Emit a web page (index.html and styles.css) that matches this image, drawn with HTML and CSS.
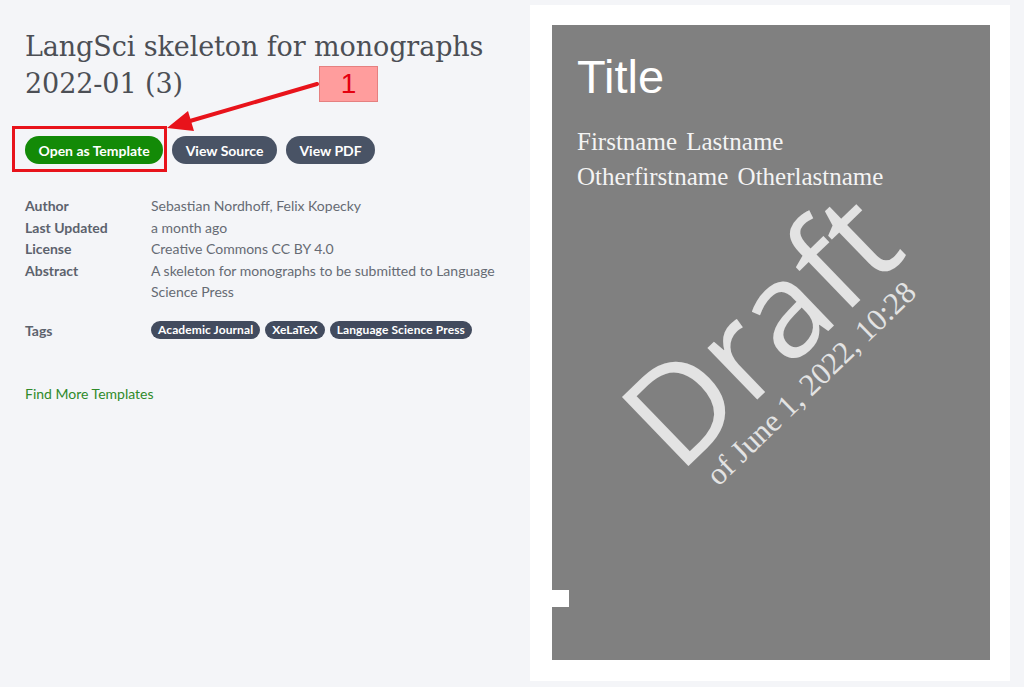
FILE: index.html
```html
<!DOCTYPE html>
<html>
<head>
<meta charset="utf-8">
<link rel="stylesheet" href="styles.css">
</head>
<body>
<div class="page">
  <section class="info">
    <h1 class="title"><span class="tline">LangSci skeleton for monographs</span><span class="tline">2022-01 (3)</span></h1>
    <div class="actions">
      <a class="btn btn-primary">Open as Template</a>
      <a class="btn btn-dark">View Source</a>
      <a class="btn btn-dark">View PDF</a>
    </div>
    <dl class="meta">
      <dt>Author</dt><dd>Sebastian Nordhoff, Felix Kopecky</dd>
      <dt>Last Updated</dt><dd>a month ago</dd>
      <dt>License</dt><dd>Creative Commons CC BY 4.0</dd>
      <dt>Abstract</dt><dd>A skeleton for monographs to be submitted to Language Science Press</dd>
      <dt class="tags-label">Tags</dt>
      <dd class="tags">
        <span class="tag">Academic Journal</span>
        <span class="tag">XeLaTeX</span>
        <span class="tag">Language Science Press</span>
      </dd>
    </dl>
    <a class="more">Find More Templates</a>
  </section>
  <section class="preview">
    <div class="sheet">
      <div class="sheet-title">Title</div>
      <div class="sheet-authors">
        <div>Firstname Lastname</div>
        <div>Otherfirstname Otherlastname</div>
      </div>
      <svg class="watermark" width="438" height="635" viewBox="0 0 438 635">
        <g transform="translate(127 450) rotate(-44)">
          <text x="0" y="0" class="wm-draft">Draft</text>
          <text x="20" y="36" class="wm-date">of June 1, 2022, 10:28</text>
        </g>
      </svg>
      <div class="notch"></div>
    </div>
  </section>
</div>
<div class="hl-box"></div>
<svg class="annot-arrow" width="1024" height="200" viewBox="0 0 1024 200">
  <line x1="317" y1="84" x2="190" y2="121" stroke="#e8131b" stroke-width="4" stroke-linecap="round"/>
  <polygon points="167,128 194,131 188,111" fill="#e8131b"/>
</svg>
<div class="annot-label">1</div>
</body>
</html>
```

FILE: styles.css
```css
html, body {
  margin: 0;
  padding: 0;
}
body {
  background: #f4f5f8;
  width: 1024px;
  height: 687px;
  overflow: hidden;
  position: relative;
  font-family: Lato, "Liberation Sans", sans-serif;
}
.page {
  display: flex;
  align-items: flex-start;
}
.info {
  width: 485px;
  padding: 26px 20px 0 25px;
}
.title {
  margin: 0;
  padding-top: 2px;
  font-family: "DejaVu Serif", serif;
  font-weight: normal;
  font-size: 27px;
  line-height: 37px;
  color: #4c4f55;
  letter-spacing: -0.1px;
}
.tline {
  display: block;
  width: max-content;
}
.actions {
  display: flex;
  gap: 9px;
  margin-top: 34px;
}
.btn {
  display: inline-flex;
  align-items: center;
  height: 28px;
  padding: 0 13.5px;
  border-radius: 14px;
  font-weight: bold;
  font-size: 14px;
  color: #fff;
}
.btn-primary {
  background: #138a07;
}
.btn-dark {
  background: #495365;
}
.meta {
  display: grid;
  grid-template-columns: 126px 1fr;
  margin: 31px 0 0;
  font-size: 14px;
  line-height: 21.5px;
}
.meta dt {
  font-weight: bold;
  color: #5c626d;
}
.meta dd {
  margin: 0;
  color: #666b74;
}
.meta .tags-label,
.meta .tags {
  margin-top: 17px;
}
.tags {
  display: flex;
  gap: 5px;
  align-items: center;
}
.tag {
  display: inline-block;
  background: #424b5e;
  color: #fff;
  font-weight: bold;
  font-size: 12px;
  line-height: 18px;
  padding: 0 7px;
  border-radius: 9px;
  letter-spacing: 0.1px;
}
.more {
  display: block;
  margin-top: 44px;
  font-size: 14px;
  color: #2f8a2a;
}
.preview {
  margin-top: 5px;
  width: 480px;
  height: 676px;
  background: #fff;
  box-sizing: border-box;
  padding: 20px 20px 0 22px;
}
.sheet {
  position: relative;
  width: 438px;
  height: 635px;
  background: #808080;
  box-sizing: border-box;
  padding: 26px 0 0 25px;
  color: #fff;
}
.sheet-title {
  font-family: "Liberation Sans", sans-serif;
  font-size: 47px;
  line-height: 52px;
}
.sheet-authors {
  margin-top: 21px;
  font-family: "Liberation Serif", serif;
  font-size: 25px;
  line-height: 35px;
  word-spacing: 3px;
  color: #f4f4f4;
}
.watermark {
  position: absolute;
  left: 0;
  top: 0;
}
.wm-draft {
  font-family: "Open Sans", sans-serif;
  font-size: 134px;
  fill: #e3e3e3;
}
.wm-date {
  font-family: "Liberation Serif", serif;
  font-size: 31px;
  fill: #e3e3e3;
}
.notch {
  position: absolute;
  left: 0;
  top: 565px;
  width: 17px;
  height: 17px;
  background: #fff;
}
.hl-box {
  position: absolute;
  left: 12px;
  top: 126px;
  width: 149px;
  height: 40px;
  border: 3px solid #e8131b;
}
.annot-arrow {
  position: absolute;
  left: 0;
  top: 0;
}
.annot-label {
  position: absolute;
  left: 319px;
  top: 66px;
  width: 57px;
  height: 34px;
  background: #ff9d9d;
  border: 1px solid #e58080;
  color: #e4000f;
  font-family: "Liberation Sans", sans-serif;
  font-size: 28px;
  line-height: 34px;
  text-align: center;
}
```
